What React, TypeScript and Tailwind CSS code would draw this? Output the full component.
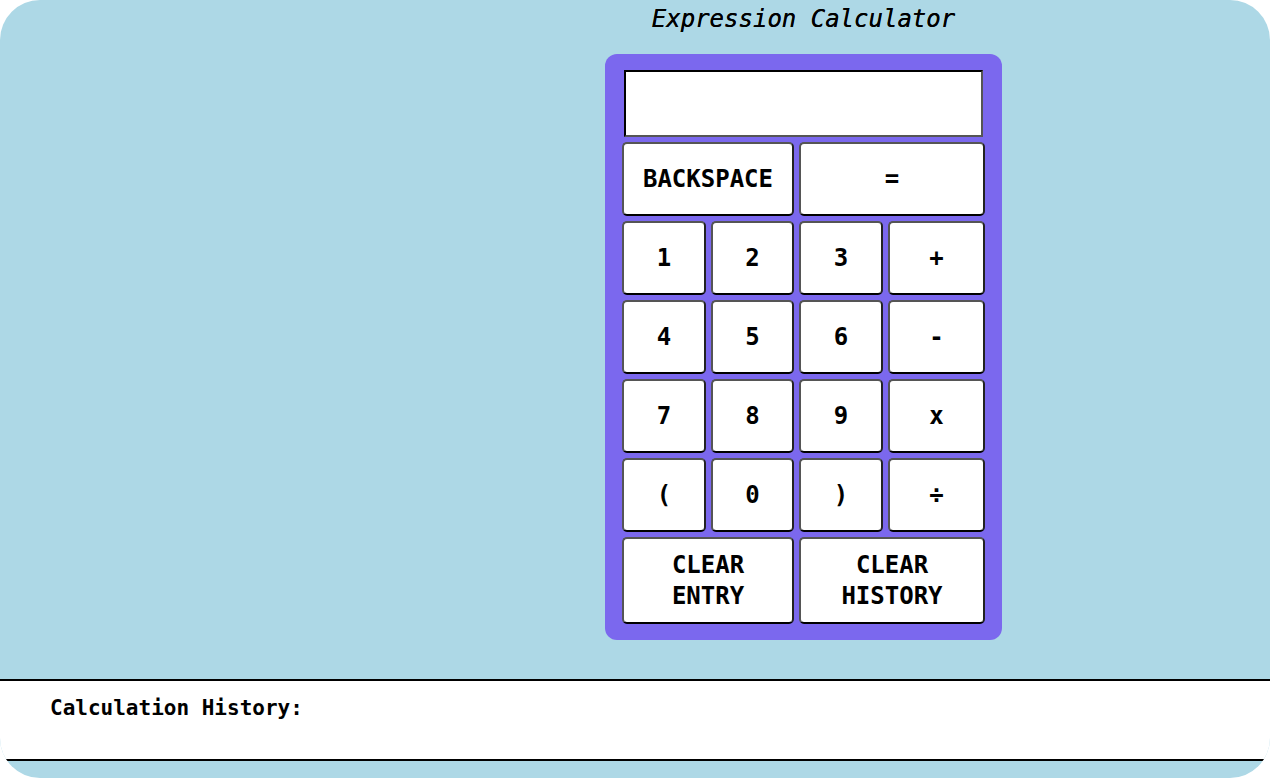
import React from 'react'

const mono = "font-['DejaVu_Sans_Mono',monospace]"

const keys: { label: React.ReactNode; span?: boolean; tall?: boolean }[] = [
  { label: 'BACKSPACE', span: true },
  { label: '=', span: true },
  { label: '1' },
  { label: '2' },
  { label: '3' },
  { label: '+' },
  { label: '4' },
  { label: '5' },
  { label: '6' },
  { label: '-' },
  { label: '7' },
  { label: '8' },
  { label: '9' },
  { label: 'x' },
  { label: '(' },
  { label: '0' },
  { label: ')' },
  { label: '÷' },
  { label: <>CLEAR<br />ENTRY</>, span: true, tall: true },
  { label: <>CLEAR<br />HISTORY</>, span: true, tall: true },
]

export default function App() {
  return (
    <div className={`${mono} w-[1270px] h-[778px] bg-[#add8e6] rounded-[40px] overflow-hidden flex flex-col`}>
      <div className="ml-[605px] w-[397px] flex flex-col">
        <h1 className="pt-[1px] text-center text-[24px] leading-[36px] italic font-normal text-black [text-shadow:0_0_0.4px_#000]">
          Expression Calculator
        </h1>

        <div className="mt-[17px] bg-[#7b68ee] rounded-[12px] pt-[16px] pb-[16px] px-[17px]">
          <div className="mx-[2px] h-[67px] bg-white border-2 border-t-black border-l-black border-b-[#555] border-r-[#555]" />
          <div className="mt-[5px] grid grid-cols-[84px_83px_84px_97px] gap-[5px]">
            {keys.map((k, i) => (
              <button
                key={i}
                className={`${k.span ? 'col-span-2' : ''} ${k.tall ? 'h-[87px] leading-[31px]' : 'h-[74px]'} bg-white border-2 border-[#555] border-b-black border-r-[#222] rounded-[5px] text-[24px] font-bold text-black flex items-center justify-center text-center`}
              >
                <span>{k.label}</span>
              </button>
            ))}
          </div>
        </div>
      </div>

      <div className="mt-[39px] h-[82px] bg-white border-y-2 border-black pl-[50px] pt-[12px]">
        <p className="text-[21px] leading-[31px] font-bold text-black">Calculation History:</p>
      </div>
    </div>
  )
}
